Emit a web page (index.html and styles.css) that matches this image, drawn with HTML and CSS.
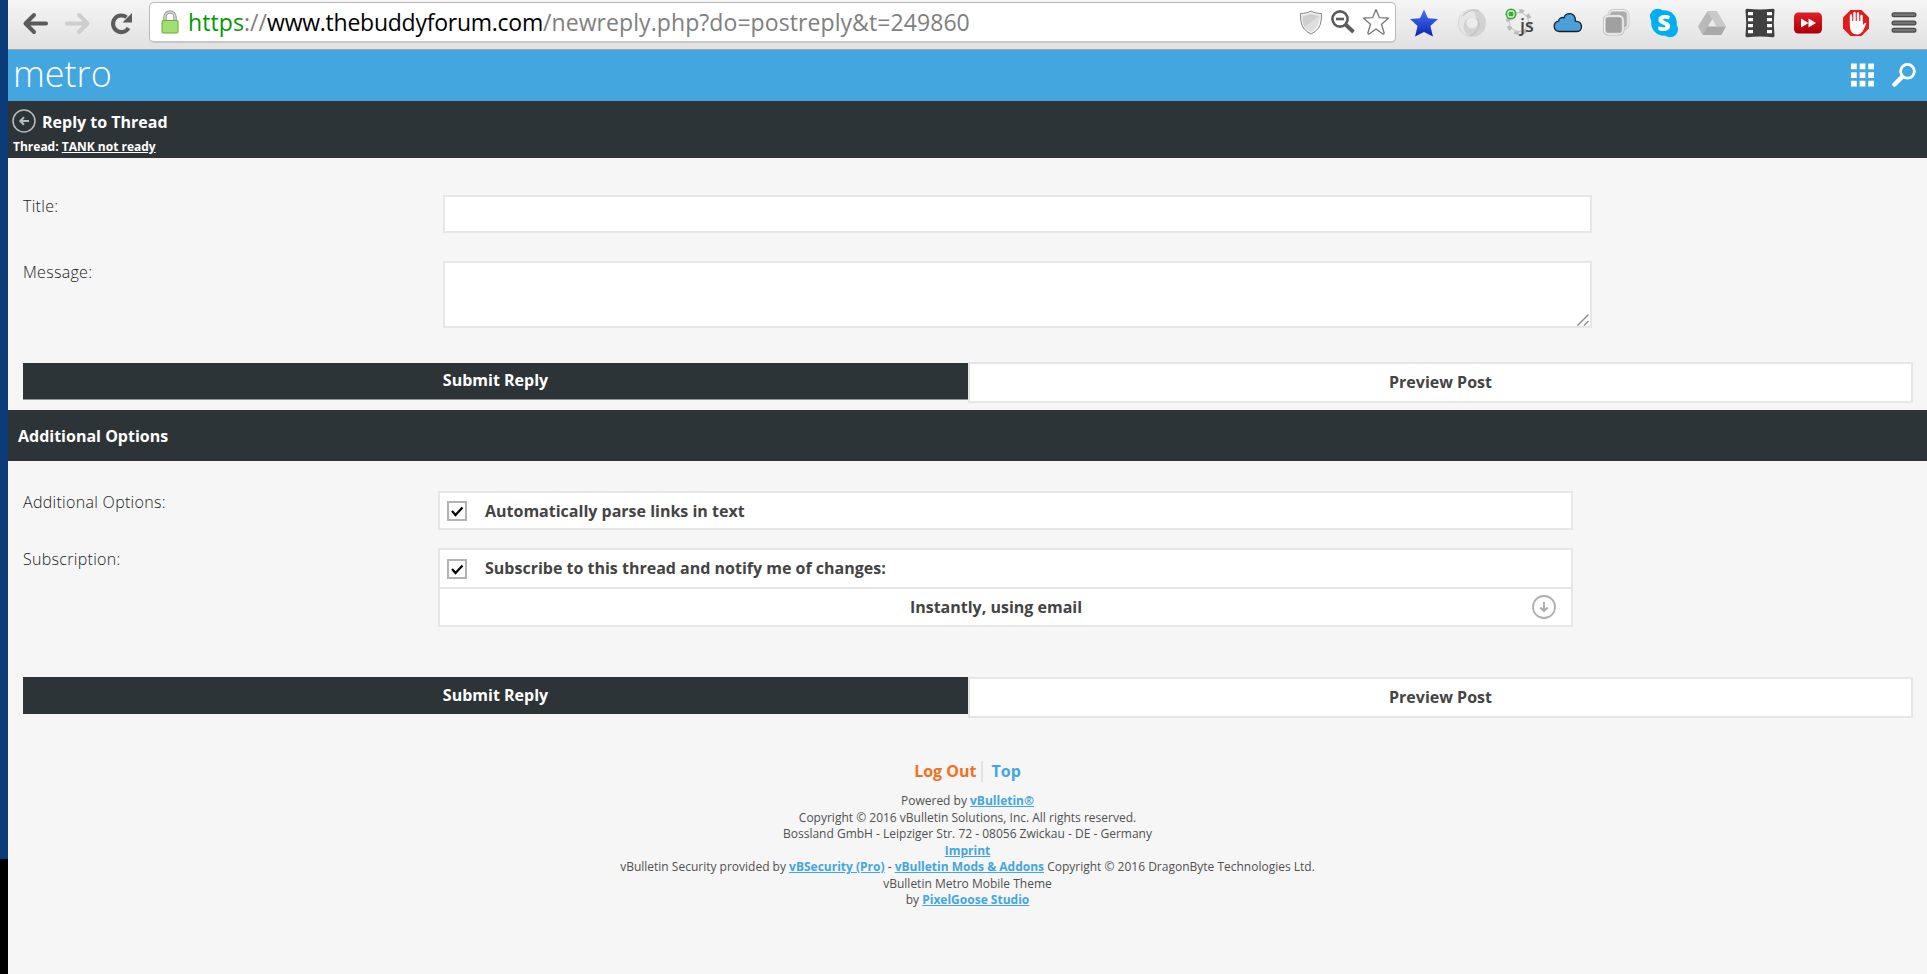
FILE: index.html
```
<!DOCTYPE html>
<html lang="en">
<head>
  <meta charset="utf-8">
  <title>Reply to Thread</title>
  <link rel="stylesheet" href="styles.css">
</head>
<body>
  <div class="desktop"></div>
  <div class="window">
    <div class="toolbar">
      <svg class="nav" viewBox="0 0 30 30"><path d="M26 15.500H6M14 7l-8.500 8.500L14 24" fill="none" stroke="#5b5b5b" stroke-width="4" stroke-linecap="round" stroke-linejoin="round"/></svg>
      <svg class="nav" viewBox="0 0 30 30"><path d="M4 15.500h20M16 7l8.500 8.500L16 24" fill="none" stroke="#cdcdcd" stroke-width="4" stroke-linecap="round" stroke-linejoin="round"/></svg>
      <svg class="nav" viewBox="0 0 30 30"><path d="M22.500 20A8.300 8.300 0 1 1 20.500 9.300" fill="none" stroke="#5b5b5b" stroke-width="4"/><path d="M26 5v9.500h-9.500z" fill="#5b5b5b"/></svg>
      <div class="address">
        <svg class="lock" viewBox="0 0 18 24"><path d="M4 11V7a5 5 0 0 1 10 0v4" fill="none" stroke="#9b9b9b" stroke-width="3.500"/><path d="M4 11V7a5 5 0 0 1 10 0v4" fill="none" stroke="#d5d5d5" stroke-width="1.500"/><rect x="1" y="10.500" width="16" height="12.500" rx="1" fill="#9fe070" stroke="#68a83c"/></svg>
        <span class="url"><span class="secure">https</span>://<span class="host">www.thebuddyforum.com</span>/newreply.php?do=postreply&amp;t=249860</span>
        <svg class="inner" viewBox="0 0 30 30"><path d="M15 4c3 2 7 2.500 10.500 2.500 0 10-1 15.500-10.500 20.500C5.500 22 4.500 16.500 4.500 6.500 8 6.500 12 6 15 4z" fill="#f2f2f2" stroke="#858585"/><path d="M15 6.500c3 1.500 5.500 2 8.500 2 0 2-.2 4-.6 5.500L8.500 20C6.500 17 6.500 13 6.500 8.500c3 0 5.500-.5 8.500-2z" fill="#cfcfcf"/><path d="M8.500 20L23 9c.3 7-2 12-8 16-3-1.500-5-3-6.500-5z" fill="#dedede"/></svg>
        <svg class="inner" viewBox="0 0 30 30"><circle cx="12" cy="12" r="7.600" fill="none" stroke="#5c5c5c" stroke-width="2.600"/><path d="M8 12h8" stroke="#5c5c5c" stroke-width="2.600"/><path d="M17.500 17.500L25.500 25" stroke="#5c5c5c" stroke-width="3.800"/></svg>
        <svg class="inner star" viewBox="0 0 30 30"><path d="M15 2.500l3.400 8.200 9.100.5-7 6 2.600 8.600c.2.900-.8 1.500-1.600 1L15 22l-6.500 4.800c-.8.5-1.800-.1-1.600-1l2.600-8.600-7-6 9.100-.5z" fill="#fff" stroke="#777" stroke-width="1.300" stroke-linejoin="round"/></svg>
      </div>
      <div class="extensions">
        <svg viewBox="0 0 30 30"><defs><linearGradient id="blue" x2="0" y2="1"><stop offset="0" stop-color="#4a70f4"/><stop offset="1" stop-color="#0b25b5"/></linearGradient></defs><path d="M15 1.500l4 8.800 10 .7-7.600 7 2.600 10.500-9-4.500-9 4.500L8.600 18 1 11l10-.7z" fill="url(#blue)"/></svg>
        <svg viewBox="0 0 30 30"><circle cx="15" cy="15" r="9.800" fill="none" stroke="#d2d2d2" stroke-width="8.500"/><path d="M15 1.200c-9 .5-15 8-13 16.800 2 6 6 9 10 10-5-4-6-8-5-12 1-6 8-8 13-5-1-4-3-7-5-9.800z" fill="#e6e6e6"/><path d="M20 10c5 7 0 15-7 18M22 3c-4-2-12-1-16 5" fill="none" stroke="#c2c2c2" stroke-width="1.200"/></svg>
        <svg viewBox="0 0 30 30"><circle cx="14" cy="14" r="11" fill="none" stroke="#bbb" stroke-width="4" stroke-dasharray="4.500 4.140"/><circle cx="14" cy="14" r="9.500" fill="#eee" stroke="#c4c4c4"/><circle cx="6" cy="6" r="5.500" fill="#35ad35"/><rect x="3" y="3" width="6" height="6" rx="2" fill="none" stroke="#d9f5d9" stroke-width="1.300"/><text x="15" y="24" class="js">js</text></svg>
        <svg viewBox="0 0 30 30"><path d="M6 23.500a5.200 5.200 0 0 1-.5-10.300c.3-3 3.200-4.300 5.500-3.400 1.500-5.500 9.500-5.500 11 0 .5 1.300.4 2.500.3 3.400 8 .3 8 10 1.700 10.300z" fill="#4b9fda" stroke="#14232e" stroke-width="1.300"/></svg>
        <svg viewBox="0 0 30 30"><rect x="8" y="2.500" width="19" height="18" rx="4.500" fill="#ababab" stroke="#c8c8c8" stroke-width="3"/><rect x="8" y="2.500" width="19" height="18" rx="4.500" fill="none" stroke="#f3f3f3" stroke-width="1.200"/><rect x="3.500" y="8" width="18.500" height="18" rx="4" fill="#a0a0a0" stroke="#bbb" stroke-width="3"/><rect x="3.500" y="8" width="18.500" height="18" rx="4" fill="none" stroke="#f6f6f6" stroke-width="1.300"/></svg>
        <svg viewBox="0 0 30 30"><circle cx="15" cy="15" r="12.800" fill="#00aff0"/><circle cx="8.800" cy="8.500" r="7.800" fill="#00aff0"/><circle cx="21.200" cy="21.500" r="7.800" fill="#00aff0"/><text x="15" y="23" class="skype">S</text></svg>
        <svg viewBox="0 0 30 30"><path d="M10.500 3h9.500l9 15.500h-9.500z" fill="#c9c9c9"/><path d="M10.500 3l4.800 8.200L5.700 27 1 18.500z" fill="#b9b9b9"/><path d="M10.500 18.500H29L24.300 27H5.700z" fill="#a9a9a9"/></svg>
        <svg viewBox="0 0 30 30"><path d="M2 .8q13 1.500 26 0 2 0 1.500 1.500-1.500 13 0 25.500 0 1.500-1.500 1.500-13-1.500-26 0-1.500 0-1.500-1.500 1.500-13 0-25.500Q.3.800 2 .8z" fill="#404040"/><path d="M3 4h5v3.300H3zm0 6h5v3.300H3zm0 6h5v3.300H3zm0 6h5v3.300H3zM22 4h5v3.300h-5zm0 6h5v3.300h-5zm0 6h5v3.300h-5zm0 6h5v3.300h-5z" fill="#fff"/></svg>
        <svg viewBox="0 0 30 30"><defs><linearGradient id="red" x2="0" y2="1"><stop offset="0" stop-color="#e22026"/><stop offset="1" stop-color="#ab0006"/></linearGradient></defs><rect x="1" y="4.500" width="28" height="21" rx="4.500" fill="url(#red)"/><path d="M8 10.500l7.500 4.500L8 19.500zM15.500 10.500L23 15l-7.500 4.500z" fill="#fff"/></svg>
        <svg viewBox="0 0 30 30"><path d="M9.500 2h11L28 9.500v11L20.500 28h-11L2 20.500v-11z" fill="#e31b1b"/><path d="M10 17.500V7.500M13.500 16V5M17 16V5.500M20.500 17V8" stroke="#fff" stroke-width="2.400" stroke-linecap="round"/><path d="M9 13h13v4c2-2.500 4-3 3-1-2 5-4 10.500-8.500 10.500C11 26.500 9 23 9 18z" fill="#fff"/></svg>
        <svg viewBox="0 0 30 30"><path d="M5 6.700h20M5 15h20M5 22.300h20" stroke="#4b4b4b" stroke-width="5" stroke-linecap="round"/><path d="M5 6.700h20M5 15h20M5 22.300h20" stroke="#747474" stroke-width="2.500" stroke-linecap="round"/></svg>
      </div>
    </div>

    <div class="header">
      <span class="logo">metro</span>
      <svg class="grid-icon" viewBox="0 0 24 24"><path d="M0 0h6v6H0zM9 0h6v6H9zM18 0h6v6h-6zM0 9h6v6H0zM9 9h6v6H9zM18 9h6v6h-6zM0 18h6v6H0zM9 18h6v6H9zM18 18h6v6h-6z" fill="#fff"/></svg>
      <svg class="search-icon" viewBox="0 0 24 24"><circle cx="15.500" cy="8.300" r="6.900" fill="none" stroke="#fff" stroke-width="2.800"/><path d="M10 14l-7.500 7.500" stroke="#fff" stroke-width="4.500" stroke-linecap="round"/></svg>
    </div>

    <div class="page-title">
      <h1><svg viewBox="0 0 24 24"><circle cx="12" cy="12" r="11" fill="none" stroke="#b9bcbd" stroke-width="1.500"/><path d="M17 12H8.500M12 8.300L8.300 12l3.700 3.700" fill="none" stroke="#b9bcbd" stroke-width="2"/></svg><span>Reply to Thread</span></h1>
      <p>Thread: <a href="#">TANK not ready</a></p>
    </div>

    <form>
      <div class="row title-row">
        <label for="title">Title:</label>
        <input id="title" class="field" type="text">
      </div>
      <div class="row message-row">
        <label for="message">Message:</label>
        <div class="message-box">
          <textarea id="message" class="field"></textarea>
          <svg class="grip" viewBox="0 0 12 12"><path d="M.5 11.500l11-11M7 11.500L11.500 7" stroke="#8a8a8a" stroke-width="1.400"/></svg>
        </div>
      </div>
      <div class="buttons first">
        <button class="submit" type="button">Submit Reply</button>
        <button class="preview" type="button">Preview Post</button>
      </div>

      <h2>Additional Options</h2>

      <div class="row option-row">
        <label>Additional Options:</label>
        <div class="options">
          <div class="option">
            <svg class="check" viewBox="0 0 20 20"><rect x="1" y="1" width="18" height="18" fill="#fff" stroke="#b3b3b3" stroke-width="2"/><path d="M5 10l3.500 4L15.500 6.500" fill="none" stroke="#000" stroke-width="2.200"/></svg>
            <span>Automatically parse links in text</span>
          </div>
        </div>
      </div>
      <div class="row option-row">
        <label>Subscription:</label>
        <div class="options">
          <div class="option subscribe">
            <svg class="check" viewBox="0 0 20 20"><rect x="1" y="1" width="18" height="18" fill="#fff" stroke="#b3b3b3" stroke-width="2"/><path d="M5 10l3.500 4L15.500 6.500" fill="none" stroke="#000" stroke-width="2.200"/></svg>
            <span>Subscribe to this thread and notify me of changes:</span>
          </div>
          <div class="select">
            <span>Instantly, using email</span>
            <svg viewBox="0 0 24 24"><circle cx="12" cy="12" r="11" fill="none" stroke="#b0b0b0" stroke-width="1.800"/><path d="M12 7v8.500M8.300 12.500l3.700 3.500 3.700-3.500" fill="none" stroke="#a8a8a8" stroke-width="1.800"/></svg>
          </div>
        </div>
      </div>
      <div class="buttons second">
        <button class="submit" type="button">Submit Reply</button>
        <button class="preview" type="button">Preview Post</button>
      </div>
    </form>

    <div class="footer">
      <div class="links"><a class="logout" href="#">Log Out</a><a class="top" href="#">Top</a></div>
      <p>Powered by <a href="#">vBulletin®</a><br>
      Copyright © 2016 vBulletin Solutions, Inc. All rights reserved.<br>
      Bossland GmbH - Leipziger Str. 72 - 08056 Zwickau - DE - Germany<br>
      <a href="#">Imprint</a><br>
      vBulletin Security provided by <a href="#">vBSecurity (Pro)</a> - <a href="#">vBulletin Mods &amp; Addons</a> Copyright © 2016 DragonByte Technologies Ltd.<br>
      vBulletin Metro Mobile Theme<br>
      by <a href="#">PixelGoose Studio</a></p>
    </div>
  </div>
</body>
</html>
```
FILE: styles.css
```
* {
  box-sizing: border-box;
}
body {
  margin: 0;
  display: flex;
  height: 974px;
  overflow: hidden;
  font-family: "Open Sans", sans-serif;
  font-size: 16px;
  color: #444;
}
svg {
  display: block;
  flex: none;
}
.desktop {
  width: 8px;
  background: linear-gradient(#0a3a78 859px, #000 859px);
}
.window {
  flex: 1;
  background: #f6f6f6;
}

/* browser bar */
.toolbar {
  display: flex;
  align-items: center;
  height: 50px;
  padding: 0 8px 4px 12px;
  background: linear-gradient(#f5f5f5, #e1e1e1);
  border-bottom: 1px solid #a6a6a6;
}
.nav {
  width: 30px;
  height: 30px;
  margin-right: 13px;
}
.address {
  display: flex;
  align-items: center;
  width: 1247px;
  height: 41px;
  padding: 0 4px 0 11px;
  background: #fff;
  border: 1px solid #b9b9b9;
  border-bottom: 2px solid #c6c6c6;
  border-radius: 5px;
}
.lock {
  width: 18px;
  height: 24px;
}
.url {
  flex: 1;
  padding-left: 9px;
  font-size: 23px;
  letter-spacing: 0.08px;
  white-space: nowrap;
  color: #808080;
}
.secure {
  color: #090;
}
.host {
  letter-spacing: -0.25px;
  color: #000;
}
.inner {
  width: 30px;
  height: 30px;
  margin-left: 2px;
}
.star {
  margin-left: 3px;
}
.extensions {
  display: flex;
  gap: 18px;
  margin-left: 13px;
}
.extensions svg {
  width: 30px;
  height: 30px;
}
.js {
  font-size: 18px;
  font-weight: 600;
  fill: #444;
}
.skype {
  font-size: 23px;
  font-weight: 800;
  text-anchor: middle;
  fill: #fff;
}

/* theme header */
.header {
  display: flex;
  align-items: center;
  height: 51px;
  padding: 0 11px 2px 5px;
  background: #43a6df;
}
.logo {
  flex: 1;
  font-size: 36px;
  font-weight: 300;
  line-height: 46px;
  padding-bottom: 2px;
  color: #fff;
}
.grid-icon {
  width: 23px;
  height: 24px;
}
.search-icon {
  width: 24px;
  height: 24px;
  margin-left: 18px;
}
.page-title {
  height: 57px;
  padding: 7px 0 0 4px;
  background: #2d3438;
  color: #fff;
}
h1 {
  display: flex;
  align-items: center;
  margin: 0;
  height: 25px;
  font-size: 16px;
  font-weight: 700;
}
h1 svg {
  width: 24px;
  height: 24px;
  margin-right: 6px;
}
h1 span {
  padding-top: 2px;
}
.page-title p {
  margin: 5px 0 0 1px;
  font-size: 12px;
  font-weight: 700;
  line-height: 18px;
}
.page-title a {
  color: #fff;
}

/* form */
.row {
  display: flex;
  padding-left: 15px;
}
.row label {
  width: 420px;
  font-weight: 300;
  letter-spacing: 0.3px;
  line-height: 22px;
  color: #222;
}
.field {
  display: block;
  width: 1149px;
  border: 2px solid #e6e6e6;
  border-radius: 0;
  background: #fff;
}
.title-row {
  margin-top: 37px;
}
.title-row .field {
  height: 38px;
}
.message-row {
  margin-top: 28px;
}
.message-box {
  position: relative;
}
.message-row .field {
  height: 67px;
  resize: none;
}
.grip {
  position: absolute;
  right: 3px;
  bottom: 2px;
  width: 12px;
  height: 12px;
}
.buttons {
  display: flex;
  align-items: flex-start;
  padding: 0 14px 0 15px;
}
.buttons button {
  font: 700 16px "Open Sans", sans-serif;
  border: 0;
}
.first {
  height: 48px;
  margin-top: 34px;
}
.second {
  margin-top: 50px;
}
.buttons .submit {
  width: 945px;
  height: 37px;
  margin-top: 1px;
  padding: 0 0 2px;
  background: #2d3438;
  color: #fff;
}
.first .submit {
  border-bottom: 1px solid #939699;
}
.second .submit {
  margin-top: 0;
}
.buttons .preview {
  flex: 1;
  height: 41px;
  padding: 0 0 2px;
  background: #fff;
  color: #444;
  border: 2px solid #e6e6e6;
}
h2 {
  margin: 0;
  height: 51px;
  padding-left: 10px;
  background: #2d3438;
  color: #fff;
  font-size: 16px;
  font-weight: 700;
  line-height: 52px;
}
.option-row {
  margin-top: 18px;
}
h2 + .option-row {
  margin-top: 30px;
}
.option-row label {
  width: 415px;
}
.options {
  width: 1135px;
  border: 2px solid #e6e6e6;
  background: #fff;
  font-weight: 700;
}
.option {
  display: flex;
  align-items: center;
  height: 35px;
  padding-left: 7px;
}
.subscribe {
  height: 37px;
}
.subscribe span {
  padding-bottom: 2px;
}
.check {
  width: 20px;
  height: 20px;
  margin-right: 18px;
}
.select {
  display: flex;
  align-items: center;
  height: 38px;
  padding-right: 15px;
  border-top: 2px solid #e6e6e6;
}
.select span {
  flex: 1;
  padding-left: 20px;
  text-align: center;
}
.select svg {
  width: 24px;
  height: 24px;
}

.footer {
  margin-top: 43px;
  text-align: center;
}
.links {
  display: flex;
  justify-content: center;
  height: 21px;
  line-height: 21px;
  font-weight: 700;
}
.links a {
  text-decoration: none;
}
.logout {
  padding-right: 4px;
  border-right: 2px solid #e2e2e2;
  color: #f37021;
}
.top {
  padding-left: 9px;
  color: #43a6df;
}
.footer p {
  margin: 11px 0 0;
  font-size: 12px;
  line-height: 16.5px;
  color: #505050;
}
.footer p a {
  color: #43a6df;
  font-weight: 700;
}
```
